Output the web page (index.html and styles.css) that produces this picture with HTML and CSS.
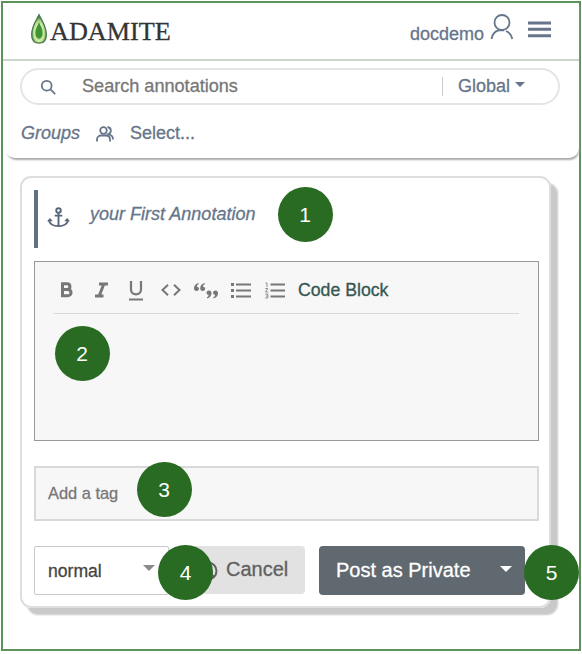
FILE: index.html
```html
<!DOCTYPE html>
<html lang="en">
<head>
<meta charset="utf-8">
<title>Adamite</title>
<link rel="stylesheet" href="styles.css">
</head>
<body>
<main class="frame">
  <header class="panel">
    <div class="topbar">
      <svg class="logo" viewBox="0 0 16 30">
        <defs><radialGradient id="gem" cx=".5" cy=".62" r=".6"><stop offset="0" stop-color="#3c9530"/><stop offset=".3" stop-color="#54a542"/><stop offset=".48" stop-color="#d9efb0"/><stop offset=".68" stop-color="#a3cf78"/><stop offset=".9" stop-color="#3b8440"/><stop offset="1" stop-color="#3b6b47"/></radialGradient></defs>
        <path d="M8 .7C6 5 .7 12 .7 20.500c0 4 1.500 7.200 4.300 8.200 2 .6 4 .6 6 0 2.800-1 4.300-4.200 4.300-8.200C15.300 12 10 5 8 .7Z" fill="url(#gem)" stroke="#47784f" stroke-width="1.300"/>
        <path d="M8 8C6.500 12 4.500 15.500 4.500 19.500c0 3 1.500 4.800 3.500 4.800s3.500-1.800 3.500-4.800C11.500 15.500 9.500 12 8 8Z" fill="#3f9432"/>
      </svg>
      <h1 class="brand">ADAMITE</h1>
      <span class="user">docdemo</span>
      <svg class="person" viewBox="0 0 24 26"><circle cx="12" cy="8.500" r="7.500"/><path d="M1.500 25c.7-4.500 3.500-8 8-9l4.500.3M16 17c3.500 1.500 5.500 4.500 6.300 8"/></svg>
      <svg class="menu" viewBox="0 0 23 17"><path d="M0 2h23M0 8.300h23M0 14.700h23"/></svg>
    </div>
    <div class="search">
      <svg class="lens" viewBox="0 0 15 15"><circle cx="5.700" cy="5.700" r="4.900"/><path d="m9.200 9.200 5 5"/></svg>
      <span class="placeholder">Search annotations</span>
      <span class="scope">Global<i class="caret"></i></span>
    </div>
    <div class="groups">
      <em>Groups</em>
      <svg class="people" viewBox="0 0 18 16"><circle cx="7.500" cy="4.500" r="3.300"/><path d="M1 15.500v-2c0-2.500 2-4 4-4h5c2.300 0 4 1.500 4 4v2M11.500 1c4 .5 4.500 5.500 1 7 2.500.8 4.500 2 4.500 5v.5"/></svg>
      <span>Select...</span>
    </div>
  </header>

  <section class="card">
    <div class="anchor-row">
      <svg class="anchor" viewBox="0 0 24 22"><circle cx="12" cy="3.700" r="2.400"/><path d="M12 6v14M8 9h8M2 14c.8 4 4.500 6 10 6s9.200-2 10-6"/><path class="solid" d="M0 15 3 11.500 6 15ZM18 15l3-3.500 3 3.500Z"/></svg>
      <em>your First Annotation</em>
      <b class="badge badge-one">1</b>
    </div>

    <div class="editor">
      <div class="toolbar">
        <svg class="tool bold" viewBox="0 0 14 16"><path d="M2.500 1.800h4.300c4.200 0 4.200 5.700 0 5.700H2.500h5c4.700 0 4.700 6.300 0 6.300h-5Z"/></svg>
        <svg class="tool italic" viewBox="0 0 14 16"><path d="M5 2h9M1 14h8.500M9.800 2 5.200 14"/></svg>
        <svg class="tool underline" viewBox="0 0 16 20"><path d="M3 0v8.500c0 6.500 10 6.500 10 0V0M1 18.500h14"/></svg>
        <svg class="tool code" viewBox="0 0 20 12"><path d="M7 .8 1.500 6 7 11.200M13 .8 18.500 6 13 11.200"/></svg>
        <svg class="tool quote" viewBox="0 0 24 17"><path d="M4.300 0C1 1 0 3 0 5.500 0 7 1 8 2.500 8S5 7 5 5.800 4 3.700 2.900 3.700C2.800 2.500 3.500 1.500 4.800 1ZM10.500 0C7.200 1 6.200 3 6.200 5.500 6.200 7 7.200 8 8.700 8s2.500-1 2.500-2.200-1-2.100-2.100-2.100C9 2.500 9.700 1.500 11 1Z"/><path d="M13.200 15.500c3.300-1 4.300-3 4.300-5.500C17.500 8.500 16.500 7.500 15 7.500s-2.500 1-2.500 2.200 1 2.100 2.100 2.100c.1 1.200-.6 2.200-1.900 2.700ZM19.700 15.500c3.300-1 4.300-3 4.300-5.500 0-1.500-1-2.500-2.500-2.500s-2.500 1-2.500 2.200 1 2.100 2.100 2.100c.1 1.200-.6 2.200-1.900 2.700Z"/></svg>
        <svg class="tool list" viewBox="0 0 20 17"><path d="M5 2.500h15M5 8.500h15M5 14.500h15"/><path class="dots" d="M0 2.500h3M0 8.500h3M0 14.500h3"/></svg>
        <svg class="tool list numbered" viewBox="0 0 20 17"><path d="M5.500 2.500H20M5.500 8.500H20M5.500 14.500H20"/><path class="fine" d="M.5 1H2v4M.3 6.500h2.500L.5 10h2.700M.3 12h2.500v4H.3M.8 14h2"/></svg>
        <span class="code-block">Code Block</span>
      </div>
      <b class="badge badge-two">2</b>
    </div>

    <div class="tag">Add a tag<b class="badge badge-three">3</b></div>

    <div class="actions">
      <div class="select">normal<i class="caret"></i></div>
      <div class="cancel"><svg class="stop" viewBox="0 0 20 20"><circle cx="10" cy="10" r="8.500"/><path d="m4 4 12 12"/></svg>Cancel</div>
      <div class="post">Post as Private<i class="caret"></i></div>
      <b class="badge badge-four">4</b>
      <b class="badge badge-five">5</b>
    </div>
  </section>
</main>
</body>
</html>
```
FILE: styles.css
```css
* { box-sizing: border-box; }
body { margin: 0; padding: 1px; background: #fff; font: 18px/22px "Liberation Sans", Arial, sans-serif; color: #66758a; -webkit-text-stroke: .3px currentColor; }
svg { display: block; flex: none; fill: none; stroke: currentColor; overflow: visible; }
.frame { width: 580px; height: 650px; border: 2px solid #5b9258; }
.panel { height: 155px; margin-left: 2px; border-radius: 0 0 10px 10px; box-shadow: 1px 3px 2px -1px #aaa; }
.topbar { height: 58px; margin-left: -2px; padding-left: 28px; display: flex; border-bottom: 2px solid #ccd5cb; }
.logo { width: 16px; height: 30px; margin-top: 11px; stroke: none; }
.brand { margin: 14px 0 0 3px; width: 360px; font: 26.2px/30px "Liberation Serif", "Times New Roman", serif; color: #343434; }
.user { width: 75px; margin-top: 20px; }
.person { width: 24px; height: 26px; margin: 11px 0 0 5px; stroke-width: 1.8; }
.menu { width: 23px; height: 17px; margin: 18px 0 0 14px; stroke-width: 3; }
.search { width: 540px; height: 37px; margin: 7px 0 0 15px; padding-left: 19px; display: flex; align-items: center; border: 2px solid #e5e5e5; border-radius: 19px; }
.lens { width: 15px; height: 15px; margin-top: 1px; stroke-width: 1.8; }
.placeholder { width: 360px; margin: -2px 0 0 26px; font-size: 18.1px; color: #777; }
.scope { height: 19px; padding-left: 15px; display: flex; align-items: center; line-height: 18px; border-left: 1px solid #ccc; }
.scope { margin-top: -1px; }
.caret { width: 0; height: 0; border: 5px solid transparent; border-top-color: currentColor; border-bottom: 0; }
.scope .caret { margin: -3px 0 0 5px; }
.groups { margin: 17px 0 0 16px; display: flex; align-items: center; }
.people { width: 18px; height: 16px; margin: 2px 16px 0; stroke-width: 1.8; }

.card { width: 531px; height: 432px; margin: 18px 0 0 17px; padding: 12px 11px; border: 2px solid #dedede; border-radius: 11px; box-shadow: 7px 7px 2px #c9c9c9; }
.anchor-row { position: relative; height: 58px; margin-left: 1px; padding: 13px 0 0 9px; display: flex; border-left: 4px solid #627083; }
.anchor { width: 23px; height: 21px; margin-top: 4px; color: #58667a; stroke-width: 2; }
.anchor .solid { fill: currentColor; stroke: none; }
.anchor-row em { margin-left: 20px; }
.badge { position: absolute; width: 55px; height: 55px; border-radius: 50%; background: #2a6b23; color: #fff; font: 21px/56px "Liberation Sans", Arial, sans-serif; text-align: center; -webkit-text-stroke: 0; }
.badge-one { left: 239.500px; top: -3px; }
.badge-two { left: 19.500px; top: 64px; }
.badge-three { left: 100.500px; top: -6px; }
.badge-four { left: 124px; top: -1px; }
.badge-five { left: 490px; top: -1px; }

.editor { position: relative; width: 505px; height: 180px; margin: 13px 0 0 1px; padding: 0 19px; border: 1.500px solid #999; background: #f7f7f7; }
.toolbar { height: 52px; padding-left: 6px; display: flex; border-bottom: 1px solid #d8d8d8; color: #777; }
.bold { width: 14px; height: 16px; margin-top: 20px; stroke-width: 3; }
.italic { width: 14px; height: 16px; margin: 20px 0 0 20px; stroke-width: 3; }
.underline { width: 16px; height: 20px; margin: 19px 0 0 20px; stroke-width: 2.200; }
.code { width: 20px; height: 12px; margin: 22px 0 0 17px; stroke-width: 2; }
.quote { width: 24px; height: 17px; margin: 21px 0 0 13px; fill: currentColor; stroke: none; }
.list { width: 20px; height: 17px; margin: 20px 0 0 13px; stroke-width: 1.800; }
.numbered { margin-left: 14px; }
.dots { stroke-width: 3; }
.fine { stroke-width: .8; }
.code-block { margin: 17px 0 0 13px; font-size: 17.700px; color: #365650; }

.tag { position: relative; width: 505px; height: 55px; margin: 25px 0 0 1px; padding-left: 12px; border: 2px solid #d9d9d9; background: #f7f7f7; color: #777; font-size: 16.400px; line-height: 51px; }
.actions { position: relative; height: 49px; margin: 25px 0 0 1px; display: flex; }
.select { width: 135px; padding: 0 13px; display: flex; align-items: center; justify-content: space-between; border: 1.500px solid #c9c9c9; border-radius: 2px; color: #444; font-size: 17.600px; line-height: 20px; }
.select .caret { color: #8a8a8a; border-width: 6px 6px 0; margin-top: -5px; }
.cancel { width: 122px; height: 48px; margin-left: 14px; padding: 0 0 2px 15px; display: flex; align-items: center; border-radius: 4px; background: #e2e2e2; color: #606060; font-size: 20px; }
.stop { width: 20px; height: 20px; margin: 3px 8px 0 0; stroke-width: 2; }
.post { width: 206px; margin-left: 14px; padding: 0 13px 2px 17px; display: flex; align-items: center; justify-content: space-between; border-radius: 4px; background: #60696f; color: #fff; font-size: 20px; }
.post .caret { border-width: 6px 6px 0; margin-top: -2px; }
```
